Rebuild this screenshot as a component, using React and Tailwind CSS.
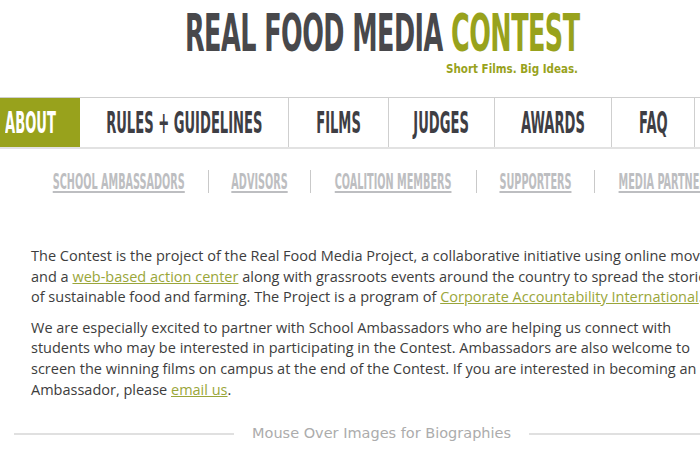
import React from "react";

const navItems = [
  { label: "ABOUT", w: "w-[80px]", active: true },
  { label: "RULES + GUIDELINES", w: "w-[208px]" },
  { label: "FILMS", w: "w-[100px]" },
  { label: "JUDGES", w: "w-[106px]" },
  { label: "AWARDS", w: "w-[117px]" },
  { label: "FAQ", w: "w-[83px]" },
  { label: "", w: "w-[100px]" },
];

const subItems = [
  { label: "SCHOOL AMBASSADORS", w: "w-[134px]" },
  { label: "ADVISORS", w: "w-[58px]" },
  { label: "COALITION MEMBERS", w: "w-[122px]" },
  { label: "SUPPORTERS", w: "w-[74px]" },
  { label: "MEDIA PARTNERS", w: "w-[100px]" },
];

const cond = { fontFamily: '"DejaVu Sans Condensed", "DejaVu Sans", sans-serif' };

const App = () => {
  return (
    <div className="w-[700px] h-[465px] overflow-hidden bg-white">
      <div className="w-[780px]">
        {/* logo */}
        <div className="pt-[11px] pl-[185px] h-[97px]">
          <div
            className="h-[44px] whitespace-nowrap text-[52px] leading-[44px] font-bold tracking-[-1px] origin-left scale-x-[0.545] text-[#48484b]"
            style={cond}
          >
            REAL FOOD MEDIA <span className="text-[#98a21c]">CONTEST</span>
          </div>
          <div
            className="w-[393px] text-right text-[11.5px] font-bold text-[#98a21c] mt-[6px]"
            style={cond}
          >
            Short Films. Big Ideas.
          </div>
        </div>

        {/* main nav */}
        <div className="flex h-[52px] border-t border-[#cfcfcf] border-b-2 border-b-[#e2e2e2]">
          {navItems.map((item, i) => (
            <div
              key={i}
              className={`${item.w} shrink-0 flex items-center ${
                item.active
                  ? "bg-[#98a21c] text-white justify-start"
                  : "text-[#3e3e44] justify-center"
              } ${i > 1 ? "border-l border-[#cfcfcf]" : ""}`}
            >
              <span
                className={`whitespace-nowrap text-[31px] font-bold scale-x-[0.47] inline-block ${
                  item.active ? "origin-left ml-[5px] scale-x-[0.44]" : ""
                }`}
                style={cond}
              >
                {item.label}
              </span>
            </div>
          ))}
        </div>

        {/* sub nav */}
        <div className="flex items-center pl-[52px] pt-[4px] h-[60px]">
          {subItems.map((item, i) => (
            <React.Fragment key={item.label}>
              {i > 0 && (
                <div className="w-[44px] flex justify-center shrink-0">
                  <div className="w-px h-[23px] bg-[#c9c9c9]" />
                </div>
              )}
              <div className={`${item.w} shrink-0 flex justify-center`}>
                <span
                  className="whitespace-nowrap text-[22px] font-bold text-[#bdbec1] underline underline-offset-2 scale-x-[0.49] inline-block"
                  style={cond}
                >
                  {item.label}
                </span>
              </div>
            </React.Fragment>
          ))}
        </div>

        {/* body copy */}
        <div
          className="pl-[31px] pt-[37px] text-[14.5px] leading-[20.6px] text-[#3d3d3d] whitespace-nowrap"
          style={{ fontFamily: '"Open Sans", "Noto Sans", sans-serif' }}
        >
          <p>
            The Contest is the project of the Real Food Media Project, a collaborative initiative using online movies
            <br />
            and a{" "}
            <a className="text-[#9aa63a] underline">web-based action center</a>{" "}
            along with grassroots events around the country to spread the stories
            <br />
            of sustainable food and farming. The Project is a program of{" "}
            <a className="text-[#9aa63a] underline">Corporate Accountability International</a>.
          </p>
          <p className="mt-[10px]">
            We are especially excited to partner with School Ambassadors who are helping us connect with
            <br />
            students who may be interested in participating in the Contest. Ambassadors are also welcome to
            <br />
            screen the winning films on campus at the end of the Contest. If you are interested in becoming an
            <br />
            Ambassador, please <a className="text-[#9aa63a] underline">email us</a>.
          </p>
        </div>

        {/* divider */}
        <div className="flex items-center mt-[23px] pl-[14px]">
          <div className="w-[220px] h-[2px] bg-[#e0e0e0]" />
          <div
            className="px-[18px] text-[14.5px] text-[#acacac] whitespace-nowrap"
            style={{ fontFamily: '"DejaVu Sans", sans-serif' }}
          >
            Mouse Over Images for Biographies
          </div>
          <div className="w-[220px] h-[2px] bg-[#e0e0e0]" />
        </div>
      </div>
    </div>
  );
};

export default App;
